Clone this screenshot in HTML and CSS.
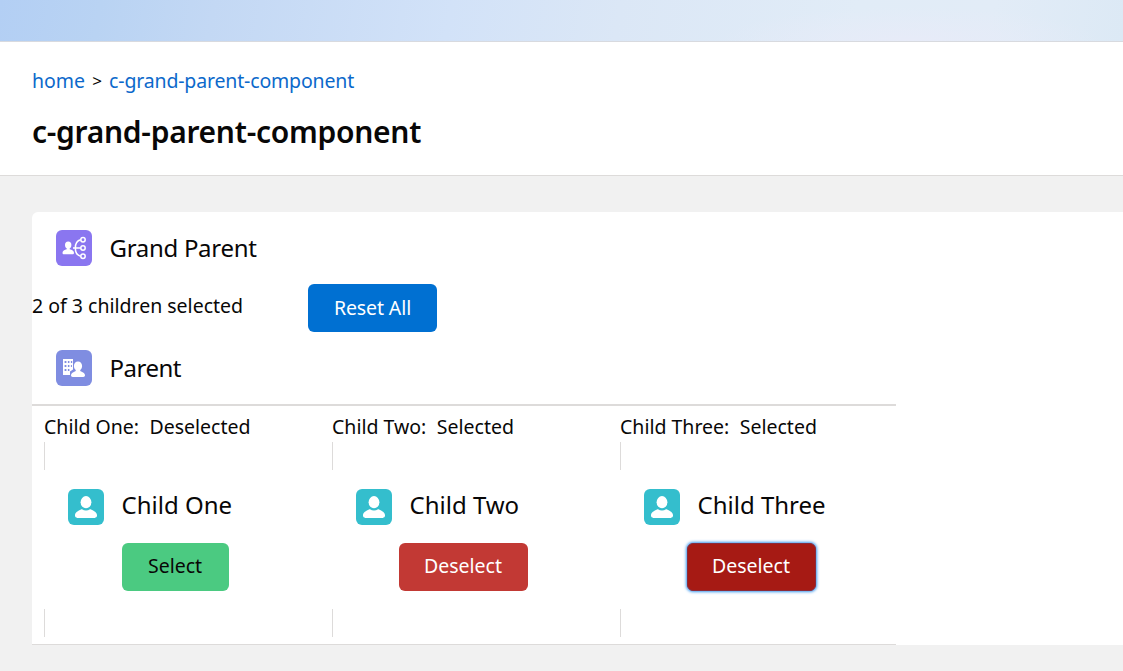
FILE: index.html
```
<!DOCTYPE html>
<html lang="en">
<head>
<meta charset="utf-8">
<title>c-grand-parent-component</title>
<link rel="stylesheet" href="styles.css">
</head>
<body>
<svg width="0" height="0" class="defs">
  <symbol id="contact" viewBox="0 0 36 36">
    <path fill="#fff" d="M29 26v.6c0 1.300-1 2.300-2.300 2.300H9.300C8 28.900 7 27.900 7 26.600V26c0-2.700 3.100-4.300 6-5.600l.3-.1c.2-.1.500-.1.700 0 1.200.8 2.600 1.200 4 1.200s2.800-.4 4-1.200c.2-.1.500-.1.700 0l.3.1c2.900 1.300 6 2.900 6 5.600z"/>
    <ellipse cx="18" cy="13.200" rx="5.400" ry="6.100" fill="#fff"/>
  </symbol>
</svg>
<div class="banner"></div>
<header class="page-header">
  <nav class="crumbs"><a class="crumb-home">home</a><span class="sep">&gt;</span><a class="crumb-page">c-grand-parent-component</a></nav>
  <h1 class="title">c-grand-parent-component</h1>
</header>
<main class="card">
  <div class="heading">
    <svg class="icon icon-grand" viewBox="0 0 36 36">
      <ellipse cx="12.200" cy="15" rx="3.200" ry="3.600" fill="#fff"/>
      <path fill="#fff" d="M10.700 17h3v2.300c2.200.8 4.300 1.500 4.300 3.400 0 1-.6 1.600-1.500 1.600H8c-.9 0-1.500-.6-1.500-1.600 0-1.900 2-2.600 4.200-3.400z"/>
      <g fill="none" stroke="#fff" stroke-width="1.500">
        <path d="M17 18h7.600M24.600 9.800c-7 1.700-7 14.700 0 16.400"/>
        <circle cx="27" cy="9.700" r="2.200"/><circle cx="27" cy="18" r="2.200"/><circle cx="27" cy="26.300" r="2.200"/>
      </g>
    </svg>
    <h2 class="grand-name">Grand Parent</h2>
  </div>
  <div class="summary"><span class="count">2 of 3 children selected</span><button class="btn brand">Reset All</button></div>
  <div class="heading">
    <svg class="icon icon-parent" viewBox="0 0 36 36">
      <path fill="#fff" fill-rule="evenodd" d="M7 9h10v10.500l-3 2V25H7zM8.600 11v2h1.800v-2zm3.300 0v2h1.500v-2zm3 0v2h1.300v-2zM8.600 15v2h1.800v-2zm3.300 0v2h1.500v-2zm3 0v2h1v-2zM8.600 19v2h1.800v-2zm3.300 0v2h1.500v-2z"/>
      <path fill="#fff" stroke="#7f8de1" stroke-width="2" paint-order="stroke" d="M22 11.500c2.400 0 4.100 1.900 4.100 4.400 0 1.900-.9 3.200-1.800 4.100-.3.900.1 1.300.9 1.600 2 .8 3.800 1.700 3.800 3.700 0 1-.7 1.700-1.700 1.700H16.700c-1 0-1.700-.7-1.700-1.700 0-2 1.800-2.900 3.800-3.700.8-.3 1.200-.7.900-1.600-.9-.9-1.800-2.200-1.800-4.100 0-2.500 1.700-4.400 4.100-4.400z"/>
    </svg>
    <h2 class="parent-name">Parent</h2>
  </div>
  <div class="children">
    <section class="child">
      <p class="status"><span>Child One:</span><span>Deselected</span></p>
      <div class="tick"></div>
      <div class="heading"><svg class="icon icon-child"><use href="#contact"/></svg><h2>Child One</h2></div>
      <div class="action"><button class="btn success">Select</button></div>
      <div class="tick"></div>
    </section>
    <section class="child">
      <p class="status"><span>Child Two:</span><span>Selected</span></p>
      <div class="tick"></div>
      <div class="heading"><svg class="icon icon-child"><use href="#contact"/></svg><h2>Child Two</h2></div>
      <div class="action"><button class="btn danger">Deselect</button></div>
      <div class="tick"></div>
    </section>
    <section class="child">
      <p class="status"><span>Child Three:</span><span>Selected</span></p>
      <div class="tick"></div>
      <div class="heading"><svg class="icon icon-child"><use href="#contact"/></svg><h2>Child Three</h2></div>
      <div class="action"><button class="btn danger focused">Deselect</button></div>
      <div class="tick"></div>
    </section>
  </div>
</main>
</body>
</html>
```
FILE: styles.css
```
* { box-sizing: border-box; margin: 0; padding: 0; }
body {
  background: #f1f1f1;
  color: #080707;
  font-family: "Noto Sans", "Open Sans", sans-serif;
  font-size: 19.5px;
  font-weight: 400;
  line-height: 28px;
  height: 671px;
  overflow: hidden;
}
.defs { display: none; }
.banner {
  height: 42px;
  border-bottom: 1px solid #d8dadf;
  background: radial-gradient(ellipse 190px 34px at 910px 41px, #e7ebf8 0%, rgba(231, 235, 248, 0) 100%),
    linear-gradient(100deg, #b3cff4 0%, #b9d3f3 9%, #c3d8f4 19%, #d2e2f8 40%, #dbe7f6 55%, #e1ecf7 76%, #e2ecf7 88%, #dce9f5 100%);
}
.page-header {
  height: 134px;
  padding: 25px 32px 0;
  background: #fff;
  border-bottom: 1px solid #dddbda;
}
.crumbs { display: flex; color: #080707; }
.crumbs a { color: #0c69cb; }
.crumb-page { letter-spacing: -.16px; }
.sep { width: 24px; text-align: center; font-size: 17px; }
.title {
  margin-top: 17px;
  font-size: 30px;
  font-weight: 600;
  line-height: 40px;
  letter-spacing: -.28px;
}
.card {
  margin: 36px 0 0 32px;
  height: 433px;
  background: #fff;
  border-radius: 6px 0 0 0;
}
.heading {
  display: flex;
  align-items: center;
  gap: 18px;
  height: 72px;
  padding-left: 24px;
}
h2 { margin-left: -.5px; padding-bottom: 2px; font-size: 24px; font-weight: 400; line-height: 35px; }
.grand-name { letter-spacing: -.3px; }
.parent-name { letter-spacing: -.5px; }
.icon { width: 36px; height: 36px; border-radius: 6px; flex: none; }
.icon-grand { background: #8a76f0; }
.icon-parent { background: #7f8de1; }
.icon-child { background: #34becd; }
.summary { display: flex; height: 48px; }
.count { width: 276px; padding-top: 8px; }
.btn {
  height: 48px;
  border: 1px solid transparent;
  border-radius: 6px;
  color: #fff;
  font: inherit;
  line-height: 45px;
  padding-bottom: 1px;
  width: 129px;
}
.brand { background: #0070d2; letter-spacing: -.1px; }
.success { width: 107px; background: #4bca81; color: #080707; }
.danger { background: #c23934; }
.focused { background: #a61a14; border-color: #8a2b3c; box-shadow: 0 0 3px 1px #3b97ed; }
.children {
  display: grid;
  grid-template-columns: repeat(3, 288px);
  width: 864px;
  height: 241px;
  border-top: 2px solid #dddbda;
  border-bottom: 1px solid #dddbda;
}
.child { padding: 7px 0 0 12px; }
.status { display: flex; gap: 10.5px; height: 29px; }
.tick { height: 28px; border-left: 1px solid #dddbda; }
.child .heading { height: 73px; }
.child h2 { padding-bottom: 4px; }
.action { display: flex; justify-content: center; height: 66px; padding-right: 14px; }
.action .btn { line-height: 43px; padding-bottom: 3px; }
```
